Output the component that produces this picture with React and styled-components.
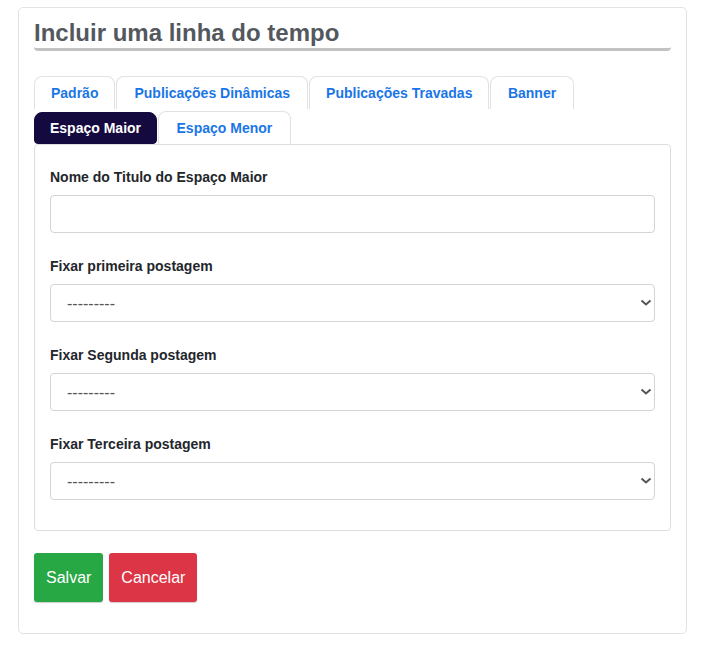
import React from 'react'
import styled, { createGlobalStyle } from 'styled-components'

const GlobalStyle = createGlobalStyle`
  body {
    margin: 0;
    background: #fff;
    font-family: "Liberation Sans", Arial, sans-serif;
  }
`

const Page = styled.div`
  padding: 7px 21px 36px 18px;
`

const Card = styled.div`
  border: 1px solid #e3e3e3;
  border-radius: 5px;
  padding: 11px 15px 31px 15px;
`

const Title = styled.h2`
  margin: 0;
  font-size: 24px;
  font-weight: bold;
  line-height: 28px;
  color: #53585e;
  padding-bottom: 1px;
  border-bottom: 3px solid #c2c2c2;
  border-radius: 0 0 4px 4px;
`

const Tabs = styled.div`
  display: flex;
  flex-wrap: wrap;
  gap: 1px;
  margin-top: 25px;
`

const Tab = styled.div`
  padding: 0 ${(p) => p.pad || 16}px;
  height: ${(p) => (p.active ? 32 : 33)}px;
  margin-top: ${(p) => (p.active ? 1 : 0)}px;
  display: flex;
  align-items: center;
  font-size: 14px;
  font-weight: bold;
  color: ${(p) => (p.active ? '#fff' : '#1a76e6')};
  background: ${(p) => (p.active ? '#150a3f' : '#fff')};
  border: 1px solid ${(p) => (p.active ? '#150a3f' : '#e2e2e2')};
  border-bottom: ${(p) => (p.active ? '1px solid #150a3f' : 'none')};
  border-radius: ${(p) => (p.active ? '8px 8px 4px 4px' : '8px 8px 0 0')};
  box-sizing: border-box;
`

const TabBreak = styled.div`
  flex-basis: 100%;
  height: 0;
  margin-top: -1px;
`

const Panel = styled.div`
  border: 1px solid #dedede;
  border-radius: 4px;
  padding: 22px 15px 30px 15px;
  display: flex;
  flex-direction: column;
  gap: 23px;
`

const Group = styled.div`
  display: flex;
  flex-direction: column;
  gap: 8px;
`

const Label = styled.label`
  font-size: 14px;
  font-weight: bold;
  line-height: 20px;
  color: #23262b;
`

const Input = styled.input`
  height: 38px;
  box-sizing: border-box;
  border: 1px solid #d4d4d4;
  border-radius: 4px;
  padding: 0 16px;
  font-size: 16px;
  font-family: inherit;
`

const SelectWrap = styled.div`
  position: relative;
`

const Select = styled.select`
  appearance: none;
  width: 100%;
  height: 38px;
  box-sizing: border-box;
  border: 1px solid #d4d4d4;
  border-radius: 4px;
  padding: 0 16px;
  background: #fff;
  font-size: 16px;
  font-family: inherit;
  color: #555;
`

const Chevron = styled.svg`
  position: absolute;
  right: 3px;
  top: 15px;
  pointer-events: none;
`

const Actions = styled.div`
  display: flex;
  gap: 6px;
  margin-top: 22px;
`

const Button = styled.button`
  height: 49px;
  padding: 0 12px;
  border: none;
  border-radius: 3px;
  font-size: 16px;
  font-family: inherit;
  color: #fff;
  background: ${(p) => (p.variant === 'danger' ? '#dc3545' : '#28a745')};
  box-shadow: 0 1px 1px rgba(0, 0, 0, 0.2);
`

const FIELDS = [
  'Fixar primeira postagem',
  'Fixar Segunda postagem',
  'Fixar Terceira postagem',
]

export default function App() {
  return (
    <Page>
      <GlobalStyle />
      <Card>
        <Title>Incluir uma linha do tempo</Title>

        <Tabs>
          <Tab>Padrão</Tab>
          <Tab pad={17}>Publicações Dinâmicas</Tab>
          <Tab>Publicações Travadas</Tab>
          <Tab pad={16.5}>Banner</Tab>
          <TabBreak />
          <Tab active pad={15}>Espaço Maior</Tab>
          <Tab pad={17.5}>Espaço Menor</Tab>
        </Tabs>

        <Panel>
          <Group>
            <Label>Nome do Titulo do Espaço Maior</Label>
            <Input type="text" />
          </Group>
          {FIELDS.map((f) => (
            <Group key={f}>
              <Label>{f}</Label>
              <SelectWrap>
                <Select defaultValue="">
                  <option value="">---------</option>
                </Select>
                <Chevron width="12" height="8" viewBox="0 0 12 8">
                  <path d="M1.5 1.5 L6 5.5 L10.5 1.5" fill="none" stroke="#555" strokeWidth="2" />
                </Chevron>
              </SelectWrap>
            </Group>
          ))}
        </Panel>

        <Actions>
          <Button>Salvar</Button>
          <Button variant="danger">Cancelar</Button>
        </Actions>
      </Card>
    </Page>
  )
}
